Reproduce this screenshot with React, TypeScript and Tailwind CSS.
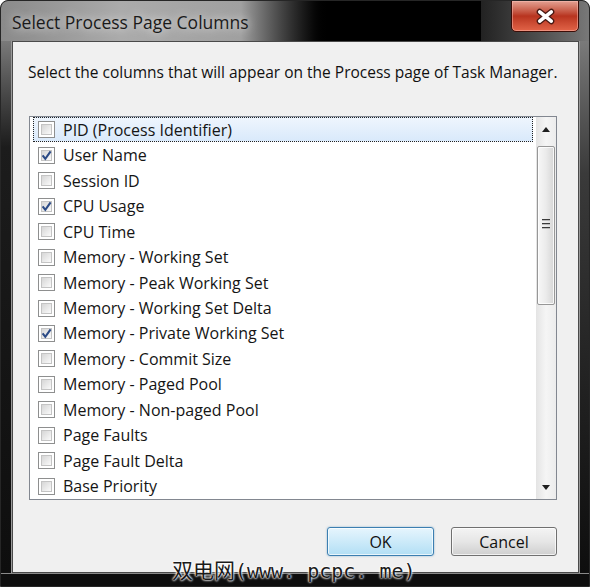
import React from "react";

const items: { label: string; checked: boolean }[] = [
  { label: "PID (Process Identifier)", checked: false },
  { label: "User Name", checked: true },
  { label: "Session ID", checked: false },
  { label: "CPU Usage", checked: true },
  { label: "CPU Time", checked: false },
  { label: "Memory - Working Set", checked: false },
  { label: "Memory - Peak Working Set", checked: false },
  { label: "Memory - Working Set Delta", checked: false },
  { label: "Memory - Private Working Set", checked: true },
  { label: "Memory - Commit Size", checked: false },
  { label: "Memory - Paged Pool", checked: false },
  { label: "Memory - Non-paged Pool", checked: false },
  { label: "Page Faults", checked: false },
  { label: "Page Fault Delta", checked: false },
  { label: "Base Priority", checked: false },
];

const CheckBox: React.FC<{ checked: boolean }> = ({ checked }) => (
  <div className="w-[17px] h-[17px] shrink-0 border border-[#8e8f8f] bg-white p-[2px]">
    <div className="relative w-full h-full border border-[#c4c4c4] bg-linear-to-br from-[#d6d6d6] to-[#fafafa]">
      {checked && (
        <svg viewBox="0 0 11 11" className="absolute -left-[1px] -top-[1px] w-[11px] h-[11px]">
          <path d="M1.6 5.4 L4.3 8.8 L9.6 1.4" fill="none" stroke="#2c4b86" strokeWidth="2.1" />
        </svg>
      )}
    </div>
  </div>
);

const Arrow: React.FC<{ up?: boolean }> = ({ up }) => (
  <svg viewBox="0 0 8 5" className="w-[8px] h-[5px]">
    <path d={up ? "M0 5 L4 0 L8 5 Z" : "M0 0 L8 0 L4 5 Z"} fill="#1f1f1f" />
  </svg>
);

const App: React.FC = () => {
  return (
    <div className="w-[590px] h-[587px] bg-white font-['Open_Sans',sans-serif]">
      <div className="relative flex flex-col w-full h-full rounded-t-[8px] border border-[#262626] bg-black overflow-hidden">
        {/* title bar */}
        <div className="relative grid grid-cols-[240px_90px_150px_110px] h-[40px] shrink-0">
          <div className="bg-linear-to-r from-[#8a8a8a] via-[#ababab] to-[#a0a0a0]" />
          <div className="bg-linear-to-r from-[#a0a0a0] to-black" />
          <div className="bg-black" />
          <div className="bg-linear-to-r from-[#222222] to-[#7a7a7a]" />
          <div className="absolute left-[11px] top-[9px] text-[17.5px] leading-[24px] text-[#1a1a1a] [text-shadow:0_0_10px_rgba(255,255,255,0.9)]">
            Select Process Page Columns
          </div>
          <div className="absolute right-[10px] -top-[1px] w-[68px] h-[32px] rounded-b-[5px] border border-[#3b0d07] bg-linear-to-b from-[#e3a092] via-[#b8341f] to-[#e26448] shadow-[inset_0_0_0_1px_rgba(255,200,190,0.45)] flex items-center justify-center">
            <svg viewBox="0 0 20 16" className="w-[21px] h-[17px]">
              <path d="M4.5 3.5 L15.5 12.5 M15.5 3.5 L4.5 12.5" stroke="#4a1a14" strokeWidth="5.8" strokeLinecap="round" />
              <path d="M4.5 3.5 L15.5 12.5 M15.5 3.5 L4.5 12.5" stroke="#ffffff" strokeWidth="3.4" strokeLinecap="round" />
            </svg>
          </div>
        </div>

        {/* body */}
        <div className="flex flex-1 min-h-0">
          <div className="w-[11px] shrink-0 bg-linear-to-b from-[#7a7a7a] via-[#1c1c1c] via-20% to-[#0e0e0e] border-r border-[#9a9a9a]" />
          <div className="w-[567px] shrink-0 bg-[#f0f0f0] border border-[#4a4a4a] flex flex-col">
            <div className="pl-[15px] pt-[20px] text-[15.5px] leading-[20px] text-[#111] whitespace-nowrap">
              Select the columns that will appear on the Process page of Task Manager.
            </div>

            {/* list box */}
            <div className="ml-[16px] mt-[34px] w-[528px] h-[384px] border border-[#828790] bg-white flex">
              <div className="flex-1 pl-[3px] flex flex-col">
                {items.map((it, i) => (
                  <div
                    key={it.label}
                    className={
                      i === 0
                        ? "h-[25.5px] w-[500px] flex items-center pl-[4px] border border-dotted border-[#222] bg-linear-to-b from-[#eef5fd] to-[#d9e9fb]"
                        : "h-[25.5px] w-[500px] flex items-center pl-[5px]"
                    }
                  >
                    <CheckBox checked={it.checked} />
                    <span className="ml-[8px] text-[16px] leading-[20px] text-[#151515] whitespace-nowrap">{it.label}</span>
                  </div>
                ))}
              </div>

              {/* scrollbar */}
              <div className="w-[20px] flex flex-col items-center bg-linear-to-r from-[#e4e4e4] via-[#f5f5f5] to-[#ececec]">
                <div className="h-[24px] w-full flex items-center justify-center">
                  <Arrow up />
                </div>
                <div className="mt-[5px] w-[18px] h-[159px] rounded-[2px] border border-[#979797] bg-linear-to-r from-[#f7f7f7] via-[#ebebeb] to-[#d6d6d6] shadow-[inset_0_0_0_1px_rgba(255,255,255,0.8)] flex items-center justify-center">
                  <div className="flex flex-col gap-[2px] pb-[4px]">
                    <div className="w-[8px] h-[2px] bg-[#3a3a3a] border-b border-[#bbb]" />
                    <div className="w-[8px] h-[2px] bg-[#3a3a3a] border-b border-[#bbb]" />
                    <div className="w-[8px] h-[2px] bg-[#3a3a3a] border-b border-[#bbb]" />
                  </div>
                </div>
                <div className="flex-1" />
                <div className="h-[24px] w-full flex items-center justify-center">
                  <Arrow />
                </div>
              </div>
            </div>

            {/* buttons */}
            <div className="mt-[27px] flex justify-end gap-[17px] pr-[21px]">
              <button className="w-[107px] h-[29px] rounded-[3px] border border-[#3c7fb1] bg-linear-to-b from-[#e6f5fd] to-[#b2dff5] shadow-[inset_0_0_0_1px_rgba(255,255,255,0.7),0_0_2px_rgba(60,127,177,0.6)] text-[16px] text-[#111]">
                OK
              </button>
              <button className="w-[106px] h-[29px] rounded-[3px] border border-[#707070] bg-linear-to-b from-[#f4f4f4] via-[#e6e6e6] to-[#cfcfcf] shadow-[inset_0_0_0_1px_rgba(255,255,255,0.7)] text-[16px] text-[#111]">
                Cancel
              </button>
            </div>
          </div>
          <div className="flex-1 bg-linear-to-b from-[#7a7a7a] via-[#3a3a3a] via-25% to-[#0e0e0e] border-l border-[#9a9a9a]" />
        </div>
        <div className="h-[13px] shrink-0 bg-[#0e0e0e] border-t border-[#8a8a8a]" />

        {/* watermark */}
        <div className="absolute left-[171px] top-[556px] flex items-baseline leading-[24px] text-[#1a1a1a] [text-shadow:0_0_2px_#fff,0_0_2px_#fff,0_0_3px_#fff] whitespace-nowrap">
          <span className="text-[21px] font-['Noto_Sans_CJK_SC',sans-serif]">双电网</span>
          <span className="text-[20px] font-['DejaVu_Sans_Mono',monospace]">(www. pcpc. me)</span>
        </div>
      </div>
    </div>
  );
};

export default App;
